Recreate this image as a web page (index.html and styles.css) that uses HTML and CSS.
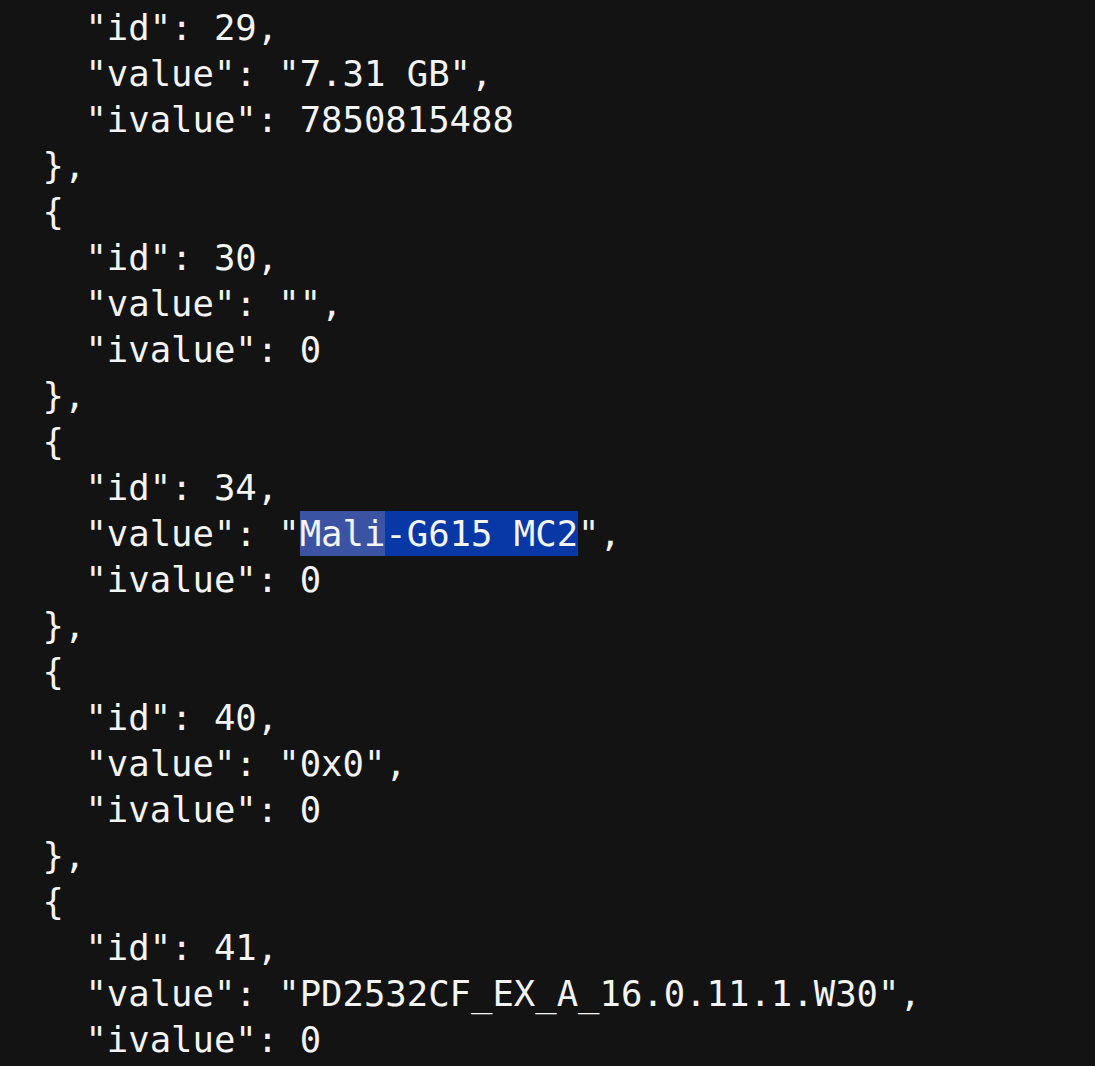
FILE: index.html
```html
<!DOCTYPE html>
<html>
<head>
<meta charset="utf-8">
<link rel="stylesheet" href="styles.css">
</head>
<body>
<pre class="code">{
  "id": 29,
  "value": "7.31 GB",
  "ivalue": 7850815488
},
{
  "id": 30,
  "value": "",
  "ivalue": 0
},
{
  "id": 34,
  "value": "<span class="sel-hover">Mali</span><span class="sel">-G615 MC2</span>",
  "ivalue": 0
},
{
  "id": 40,
  "value": "0x0",
  "ivalue": 0
},
{
  "id": 41,
  "value": "PD2532CF_EX_A_16.0.11.1.W30",
  "ivalue": 0</pre>
</body>
</html>
```
FILE: styles.css
```css
html, body {
  margin: 0;
  padding: 0;
  background: #131313;
  height: 100%;
  overflow: hidden;
}
.code {
  margin: -41px 0 0 0;
  padding: 0 0 0 42.6px;
  font-family: "DejaVu Sans Mono", "Liberation Mono", monospace;
  font-size: 35.6px;
  line-height: 46px;
  color: #f4f4f4;
  white-space: pre;
}
.sel-hover {
  background: #3a53a3;
  padding: 2.3px 0;
}
.sel {
  background: #0837a6;
  padding: 2.3px 0;
}
```
